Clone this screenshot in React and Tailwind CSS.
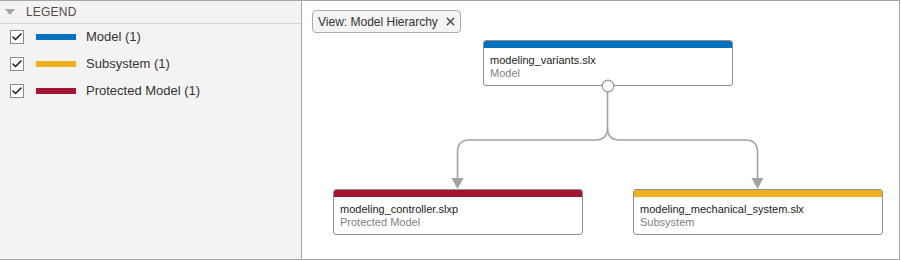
import { Check, X } from 'lucide-react'

const legend = [
  { label: 'Model (1)',           color: 'bg-[#0072bd]' },
  { label: 'Subsystem (1)',       color: 'bg-[#edb120]' },
  { label: 'Protected Model (1)', color: 'bg-[#a2142f]' },
]

function Node({ name, kind, bar, className }) {
  return (
    <div className={`absolute w-[250px] h-[46px] bg-white border border-[#8f8f8f] rounded-[3px] overflow-hidden ${className}`}>
      <div className={`h-[7px] ${bar}`} />
      <div className="pl-[6px] pt-[6px] text-[11px] leading-[13px]">
        <p className="text-[#1a1a1a]">{name}</p>
        <p className="text-[#7f7f7f]">{kind}</p>
      </div>
    </div>
  )
}

export default function App() {
  return (
    <div className="w-[900px] h-[260px] flex border-t border-b border-r border-[#a6a6a6] font-['Liberation_Sans',Arial,sans-serif]">
      {/* Legend */}
      <aside className="w-[302px] shrink-0 bg-[#f3f3f3] border-r border-[#a6a6a6]">
        <div className="h-[23px] flex items-center border-b border-[#d6d6d6]">
          <svg width="10" height="6" viewBox="0 0 10 6" className="ml-[5px] mr-[11px]">
            <polygon points="0,0 10,0 5,6" fill="#a3a3a3" />
          </svg>
          <span className="text-[12px] text-[#5a4848] tracking-[0.2px]">LEGEND</span>
        </div>
        <div className="-mt-[1px]">
          {legend.map(item => (
            <div key={item.label} className="h-[27px] flex items-center">
              <span className="ml-[10px] w-[14px] h-[14px] bg-white border border-[#8a8a8a] flex items-center justify-center">
                <Check size={12} strokeWidth={3.2} className="text-[#1f1f1f]" />
              </span>
              <span className={`ml-[12px] w-[40px] h-[6px] ${item.color}`} />
              <span className="ml-[10px] text-[13px] text-[#333333]">{item.label}</span>
            </div>
          ))}
        </div>
      </aside>

      {/* Canvas */}
      <main className="relative flex-1 bg-white">
        <div className="absolute left-[10px] top-[9px] h-[23px] w-[149px] flex items-center justify-between pl-[5px] pr-[3px] bg-[#f4f4f4] border border-[#ababab] rounded-[4px] text-[12px] text-[#333333]">
          <span>View: Model Hierarchy</span>
          <X size={13} strokeWidth={2.6} className="text-[#444444]" />
        </div>

        <svg className="absolute inset-0" width="598" height="258" viewBox="0 0 598 258">
          <g fill="none" stroke="#a3a3a3" strokeWidth="1.6">
            <path d="M305.5 90 V127 Q305.5 139 293.5 139 H167.5 Q155.5 139 155.5 151 V178" />
            <path d="M305.5 127 Q305.5 139 317.5 139 H443.5 Q455.5 139 455.5 151 V178" />
          </g>
          <polygon points="149.5,177 161.5,177 155.5,188" fill="#a3a3a3" />
          <polygon points="449.5,177 461.5,177 455.5,188" fill="#a3a3a3" />
        </svg>

        <Node name="modeling_variants.slx" kind="Model" bar="bg-[#0072bd]" className="left-[181px] top-[39px]" />
        <Node name="modeling_controller.slxp" kind="Protected Model" bar="bg-[#a2142f]" className="left-[31px] top-[188px]" />
        <Node name="modeling_mechanical_system.slx" kind="Subsystem" bar="bg-[#edb120]" className="left-[331px] top-[188px]" />

        <svg className="absolute left-[299px] top-[78px]" width="14" height="14" viewBox="0 0 14 14">
          <circle cx="7" cy="7" r="5.8" fill="white" stroke="#969696" strokeWidth="1.3" />
        </svg>
      </main>
    </div>
  )
}
